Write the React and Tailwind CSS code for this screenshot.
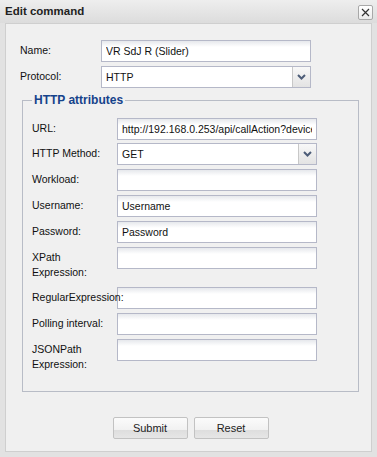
const inputCls =
  "h-[22px] border border-[#b5b8c8] bg-[linear-gradient(to_bottom,#e6e8ec,#ffffff_30%)] px-[4px] text-[10.5px] leading-[20px] text-[#111] outline-none";

function Field({ value = "", width }) {
  return <input readOnly value={value} className={`${inputCls} ${width}`} />;
}

function Select({ value, width }) {
  return (
    <div className={`flex h-[22px] border border-[#b5b8c8] bg-white ${width}`}>
      <div className="flex-1 px-[4px] text-[10.5px] leading-[20px] text-[#111]">{value}</div>
      <div className="flex w-[18px] items-center justify-center border-l border-[#c8c8c8] bg-[linear-gradient(to_bottom,#f8f8f8,#e3e3e3)]">
        <svg width="9" height="6" viewBox="0 0 9 6">
          <path d="M1 1 L4.5 4.5 L8 1" fill="none" stroke="#4d5d78" strokeWidth="2" />
        </svg>
      </div>
    </div>
  );
}

// label text may run over the input (RegularExpression:), so keep it above
function Row({ label, children, mb = "mb-[4px]" }) {
  return (
    <div className={`flex items-start ${mb}`}>
      <div className="relative z-10 w-[85px] shrink-0 whitespace-nowrap pt-[3px] text-[10.5px] leading-[15px] text-[#111]">
        {label}
      </div>
      {children}
    </div>
  );
}

export default function App() {
  return (
    <div className="flex h-[457px] w-[377px] flex-col rounded-tl-[4px] bg-[#e2e2e2] font-['Liberation_Sans',Arial,sans-serif]">
      {/* title bar */}
      <div className="flex h-[23px] items-center justify-between bg-[linear-gradient(to_bottom,#eeeeee,#dcdcdc)] pl-[5px] pr-[4px]">
        <span className="text-[11.5px] font-bold text-[#222]">Edit command</span>
        <button className="mt-[1px] flex h-[15px] w-[15px] items-center justify-center rounded-[2px] border border-[#a8a8a8] bg-[linear-gradient(to_bottom,#ffffff,#ececec)]">
          <svg width="9" height="9" viewBox="0 0 9 9">
            <path d="M1 1 L8 8 M8 1 L1 8" stroke="#333" strokeWidth="1.2" />
          </svg>
        </button>
      </div>

      {/* body */}
      <div className="mx-[5px] mb-[5px] flex-1 border border-[#cfcfcf] bg-[#f0f0f0] pl-[14px] pt-[16px]">
        <div className="mb-[4px] flex items-center">
          <div className="w-[81px] text-[10.5px] text-[#111]">Name:</div>
          <Field value="VR SdJ R (Slider)" width="w-[210px]" />
        </div>
        <div className="flex items-center">
          <div className="w-[81px] text-[10.5px] text-[#111]">Protocol:</div>
          <Select value="HTTP" width="w-[210px]" />
        </div>

        <fieldset className="ml-[2px] mt-[5px] w-[337px] border border-[#b8bcc6] pb-[19px] pl-[9px] pt-[11px]">
          <legend className="px-[2px] text-[12px] font-bold leading-[14px] text-[#15428b]">
            HTTP attributes
          </legend>
          <Row label="URL:" mb="mb-[3px]">
            <Field value="http://192.168.0.253/api/callAction?device=" width="w-[200px]" />
          </Row>
          <Row label="HTTP Method:">
            <Select value="GET" width="w-[200px]" />
          </Row>
          <Row label="Workload:">
            <Field width="w-[200px]" />
          </Row>
          <Row label="Username:">
            <Field value="Username" width="w-[200px]" />
          </Row>
          <Row label="Password:">
            <Field value="Password" width="w-[200px]" />
          </Row>
          <Row label={<>XPath<br />Expression:</>} mb="mb-[7px]">
            <Field width="w-[200px]" />
          </Row>
          <Row label="RegularExpression:">
            <Field width="w-[200px]" />
          </Row>
          <Row label="Polling interval:">
            <Field width="w-[200px]" />
          </Row>
          <Row label={<>JSONPath<br />Expression:</>} mb="mb-0">
            <Field width="w-[200px]" />
          </Row>
        </fieldset>

        <div className="mt-[25px] flex justify-center gap-[6px] pr-[10px]">
          {["Submit", "Reset"].map((t) => (
            <button
              key={t}
              className="h-[22px] w-[75px] rounded-[2px] border border-[#c2c2c2] bg-[linear-gradient(to_bottom,#fbfbfb,#f1f1f1_60%,#dedede_62%,#e6e6e6)] text-[11px] text-[#222]"
            >
              {t}
            </button>
          ))}
        </div>
      </div>
    </div>
  );
}
